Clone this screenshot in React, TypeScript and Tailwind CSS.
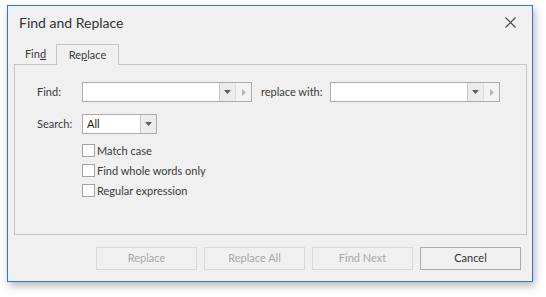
import { useState } from "react";

// Combo box: white edit area, a dropdown button and a small disabled "next" button.
function Combo({ width, spin = true, value = "" }: { width: string; spin?: boolean; value?: string }) {
  return (
    <div className={`flex h-[20px] ${width} border border-[#acacac] bg-white`}>
      <div className="flex-1 pl-[4px] text-[11px] leading-[18px] text-[#222]">{value}</div>
      <div className="flex w-[16px] items-center justify-center border-l border-[#c9c9c9] bg-[#ececec]">
        <svg width="7" height="4" viewBox="0 0 7 4">
          <path d="M0 0h7L3.5 4z" fill="#5c5c5c" />
        </svg>
      </div>
      {spin && (
        <div className="flex w-[16px] items-center justify-center border-l border-[#dcdcdc] bg-[#f3f3f3]">
          <svg width="4" height="7" viewBox="0 0 4 7">
            <path d="M0 0v7L4 3.5z" fill="#b4b4b4" />
          </svg>
        </div>
      )}
    </div>
  );
}

function Check({ label }: { label: string }) {
  const [on, setOn] = useState(false);
  return (
    <label className="flex h-[13px] items-center gap-[2px] cursor-default" onClick={() => setOn(!on)}>
      <span className="flex h-[13px] w-[13px] items-center justify-center border border-[#a3a3a3] bg-white text-[10px] leading-none">
        {on ? "✓" : ""}
      </span>
      <span className="text-[11px] leading-none text-[#3a3a3a]">{label}</span>
    </label>
  );
}

function DlgButton({ children, disabled }: { children: string; disabled?: boolean }) {
  return (
    <button
      disabled={disabled}
      className={`h-[23px] w-[101px] border text-[11px] ${
        disabled ? "border-[#d9d9d9] text-[#a8a8a8]" : "border-[#adadad] text-[#333]"
      } bg-[#f0f0f0]`}
    >
      {children}
    </button>
  );
}

export default function App() {
  const [tab, setTab] = useState<"find" | "replace">("replace");

  return (
    <div className="h-[297px] w-[546px] bg-white pl-[7px] pt-[5px] font-['Lato','Liberation_Sans',sans-serif]">
      <div className="flex h-[277px] w-[526px] flex-col border border-[#2a7ad5] bg-[#f0f0f0] shadow-[2px_4px_8px_rgba(0,0,0,0.28)]">
        {/* title bar */}
        <div className="flex h-[31px] items-center justify-between pl-[11px] pr-[16px] pt-[1px]">
          <span className="text-[14px] text-[#333]">Find and Replace</span>
          <svg width="11" height="11" viewBox="0 0 11 11">
            <path d="M0.5 0.5l10 10M10.5 0.5l-10 10" stroke="#444" strokeWidth="1.1" />
          </svg>
        </div>

        {/* tabs */}
        <div className="mt-[7px] flex h-[20px] items-end pl-[6px]">
          <button
            onClick={() => setTab("find")}
            className="h-[19px] w-[42px] pl-[1px] text-[11px] text-[#3a3a3a]"
          >
            Fin<span className="underline">d</span>
          </button>
          <button
            onClick={() => setTab("replace")}
            className="relative -mb-px h-[21px] w-[63px] border border-b-0 border-[#c6c6c6] bg-[#f0f0f0] text-[11px] text-[#3a3a3a]"
          >
            Re<span className="underline">p</span>lace
          </button>
        </div>

        {/* panel */}
        <div className="ml-[6px] mr-[5px] flex h-[171px] flex-col border border-[#c6c6c6] pt-[17px]">
          <div className="flex items-center pl-[22px]">
            <span className="w-[45px] text-[11px] text-[#3a3a3a]">Find:</span>
            <Combo width="w-[170px]" />
            {tab === "replace" && (
              <>
                <span className="ml-[9px] w-[69px] text-[11px] text-[#3a3a3a]">replace with:</span>
                <Combo width="w-[170px]" />
              </>
            )}
          </div>
          <div className="mt-[12px] flex items-center pl-[22px]">
            <span className="w-[45px] text-[11px] text-[#3a3a3a]">Search:</span>
            <Combo width="w-[75px]" spin={false} value="All" />
          </div>
          <div className="mt-[10px] flex flex-col gap-[7px] pl-[67px]">
            <Check label="Match case" />
            <Check label="Find whole words only" />
            <Check label="Regular expression" />
          </div>
        </div>

        {/* buttons */}
        <div className="mt-[12px] flex justify-end gap-[7px] pr-[11px]">
          <DlgButton disabled>Replace</DlgButton>
          <DlgButton disabled>Replace All</DlgButton>
          <DlgButton disabled>Find Next</DlgButton>
          <DlgButton>Cancel</DlgButton>
        </div>
      </div>
    </div>
  );
}
